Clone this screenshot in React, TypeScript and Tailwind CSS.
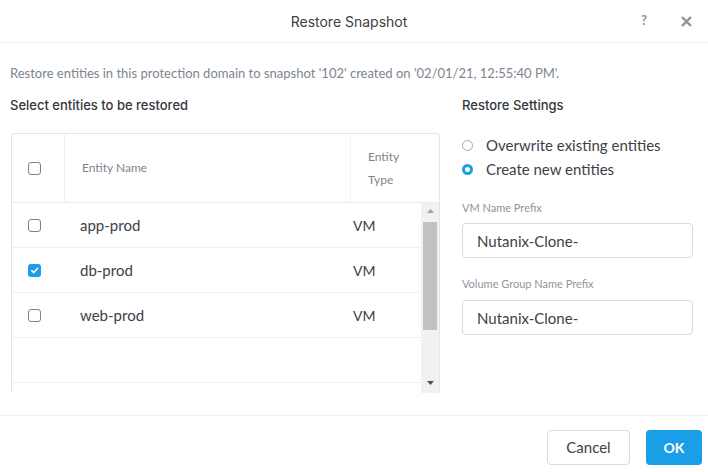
import React, { useState } from 'react';

type Entity = { name: string; type: string };

const entities: Entity[] = [
  { name: 'app-prod', type: 'VM' },
  { name: 'db-prod', type: 'VM' },
  { name: 'web-prod', type: 'VM' },
];

function Checkbox({ checked, onClick }: { checked: boolean; onClick?: () => void }) {
  if (checked) {
    return (
      <button
        onClick={onClick}
        className="w-[13px] h-[13px] rounded-[3px] bg-[#1b9ee8] flex items-center justify-center"
      >
        <svg width="9" height="9" viewBox="0 0 10 10" fill="none">
          <path d="M2 5.2 L4.2 7.3 L8.2 2.7" stroke="white" strokeWidth="1.8" strokeLinecap="round" strokeLinejoin="round" />
        </svg>
      </button>
    );
  }
  return (
    <button
      onClick={onClick}
      className="w-[13px] h-[13px] rounded-[3px] border-[1.5px] border-[#7d838c] bg-white"
    />
  );
}

function Radio({ checked, label, onClick }: { checked: boolean; label: string; onClick: () => void }) {
  return (
    <label className="flex items-center gap-[13px] h-[20px] cursor-pointer" onClick={onClick}>
      {checked ? (
        <span className="w-[11px] h-[11px] rounded-full border-[3.5px] border-[#1b9ee8] bg-white" />
      ) : (
        <span className="w-[11px] h-[11px] rounded-full border border-[#a3a8b0] bg-white" />
      )}
      <span className="text-[15px] text-[#3d4148]">{label}</span>
    </label>
  );
}

export default function App() {
  // 選択中のエンティティ
  const [selected, setSelected] = useState<string[]>(['db-prod']);
  const [mode, setMode] = useState<'overwrite' | 'create'>('create');
  const [vmPrefix, setVmPrefix] = useState('Nutanix-Clone-');
  const [vgPrefix, setVgPrefix] = useState('Nutanix-Clone-');

  const toggle = (name: string) =>
    setSelected((s) => (s.includes(name) ? s.filter((n) => n !== name) : [...s, name]));

  return (
    <div className="w-[708px] h-[472px] bg-white flex flex-col font-['Lato',sans-serif] overflow-hidden">
      {/* ヘッダー */}
      <div className="h-[43px] shrink-0 flex items-center border-b border-[#eef0f2]">
        <div className="flex-1" />
        <div className="text-[14px] font-['Inter',sans-serif] text-[#3b3f45] pl-[6px]">Restore Snapshot</div>
        <div className="flex-1 flex justify-end items-center gap-[34px] pr-[16px]">
          <span className="text-[13px] font-bold text-[#8f959e]">?</span>
          <svg width="11" height="11" viewBox="0 0 10 10">
            <path d="M1.5 1.5 L8.5 8.5 M8.5 1.5 L1.5 8.5" stroke="#8f959e" strokeWidth="2" strokeLinecap="round" />
          </svg>
        </div>
      </div>

      {/* 本文 */}
      <div className="flex-1 min-h-0 flex flex-col pl-[10px] pt-[21px]">
        <p className="text-[13px] leading-[18px] text-[#7c8590]">
          Restore entities in this protection domain to snapshot '102' created on '02/01/21, 12:55:40 PM'.
        </p>

        <div className="flex flex-1 min-h-0 mt-[14px]">
          {/* 左側: エンティティ一覧 */}
          <div className="w-[430px] flex flex-col min-h-0">
            <h3 className="text-[13px] leading-[18px] font-medium font-['Inter',sans-serif] text-[#33373d]">
              Select entities to be restored
            </h3>
            <div className="mt-[19px] ml-[1px] w-[429px] h-[260px] border-x border-t border-[#e3e6ea] rounded-t-[4px] flex flex-col overflow-hidden">
              <div className="h-[69px] shrink-0 flex border-b border-[#e9ebee] text-[12px] text-[#7c8590]">
                <div className="w-[53px] border-r border-[#eef0f2] flex items-center pl-[16px]">
                  <Checkbox checked={false} />
                </div>
                <div className="flex-1 border-r border-[#eef0f2] flex items-center pl-[17px]">Entity Name</div>
                <div className="w-[88px] flex flex-col justify-center pl-[17px] leading-[23px]">
                  <span>Entity</span>
                  <span>Type</span>
                </div>
              </div>
              <div className="flex flex-1 min-h-0">
                <div className="flex-1 flex flex-col">
                  {entities.map((e) => (
                    <div key={e.name} className="h-[45px] shrink-0 flex items-center border-b border-[#eef0f2] text-[15px] text-[#3d4148]">
                      <div className="w-[53px] pl-[16px] flex items-center">
                        <Checkbox checked={selected.includes(e.name)} onClick={() => toggle(e.name)} />
                      </div>
                      <div className="flex-1 pl-[15px]">{e.name}</div>
                      <div className="w-[69px] pl-[1px] text-[14px]">{e.type}</div>
                    </div>
                  ))}
                  <div className="h-[45px] shrink-0 border-b border-[#eef0f2]" />
                </div>
                {/* スクロールバー */}
                <div className="w-[18px] bg-[#f1f1f1] flex flex-col items-center">
                  <svg width="7" height="4" viewBox="0 0 7 4" className="mt-[6px]">
                    <path d="M0 4 L3.5 0 L7 4 Z" fill="#a3a3a3" />
                  </svg>
                  <div className="w-[14px] h-[108px] bg-[#c1c1c1] mt-[9px]" />
                  <div className="flex-1" />
                  <svg width="7" height="4" viewBox="0 0 7 4" className="mb-[8px]">
                    <path d="M0 0 L7 0 L3.5 4 Z" fill="#505050" />
                  </svg>
                </div>
              </div>
            </div>
          </div>

          {/* 右側: 復元設定 */}
          <div className="ml-[22px] w-[231px] flex flex-col">
            <h3 className="text-[13px] leading-[18px] font-medium font-['Inter',sans-serif] text-[#33373d]">
              Restore Settings
            </h3>
            <div className="mt-[21px] flex flex-col gap-[4px]">
              <Radio checked={mode === 'overwrite'} label="Overwrite existing entities" onClick={() => setMode('overwrite')} />
              <Radio checked={mode === 'create'} label="Create new entities" onClick={() => setMode('create')} />
            </div>
            <label className="mt-[22px] text-[11px] leading-[14px] text-[#8f959e]">VM Name Prefix</label>
            <input
              value={vmPrefix}
              onChange={(e) => setVmPrefix(e.target.value)}
              className="mt-[8px] h-[35px] w-[231px] rounded-[4px] border border-[#d7dbe0] px-[14px] text-[15px] text-[#3d4148] outline-none"
            />
            <label className="mt-[19px] text-[11px] leading-[14px] text-[#8f959e]">Volume Group Name Prefix</label>
            <input
              value={vgPrefix}
              onChange={(e) => setVgPrefix(e.target.value)}
              className="mt-[9px] h-[35px] w-[231px] rounded-[4px] border border-[#d7dbe0] px-[14px] text-[15px] text-[#3d4148] outline-none"
            />
          </div>
        </div>
      </div>

      {/* フッター */}
      <div className="h-[57px] shrink-0 border-t border-[#eef0f2] flex items-start justify-end gap-[16px] pt-[14px] pr-[6px]">
        <button className="h-[35px] w-[83px] rounded-[4px] border border-[#d7dbe0] bg-white text-[15px] text-[#3d4148]">
          Cancel
        </button>
        <button className="h-[35px] w-[56px] rounded-[4px] bg-[#1b9ee8] text-[14px] font-bold text-white">OK</button>
      </div>
    </div>
  );
}
